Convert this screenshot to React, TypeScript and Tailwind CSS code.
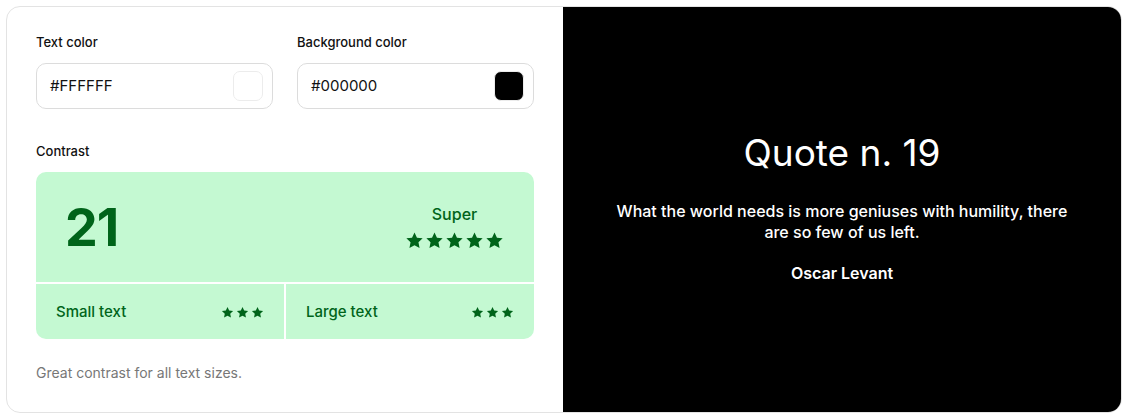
import { useState } from 'react';

const GREEN_BG = 'bg-[#c4f9d2]';

function Star({ size }: { size: number }) {
  return (
    <svg width={size} height={size} viewBox="0 0 24 24" fill="#00641a">
      <path d="M12 1.8l3.1 6.6 7.2.9-5.3 5 1.4 7.1L12 17.9l-6.4 3.5L7 14.3l-5.3-5 7.2-.9z" />
    </svg>
  );
}

function Stars({ count, size, gap }: { count: number; size: number; gap: string }) {
  return (
    <div className={`flex ${gap}`}>
      {Array.from({ length: count }).map((_, i) => (
        <Star key={i} size={size} />
      ))}
    </div>
  );
}

function ColorField({ label, value, swatch }: { label: string; value: string; swatch: string }) {
  return (
    <div className="flex-1">
      <div className="text-[13px] font-medium text-[#111] leading-none mb-[14px]">{label}</div>
      <div className="h-[46px] rounded-[10px] border border-[#dcdcdc] flex items-center justify-between pl-[13px] pr-[9px]">
        <span className="text-[15px] text-[#111]">{value}</span>
        <span className={`w-[30px] h-[30px] rounded-[7px] border border-[#ececec] ${swatch}`} />
      </div>
    </div>
  );
}

export default function App() {
  const [fg] = useState('#FFFFFF');
  const [bg] = useState('#000000');

  return (
    <div className="pt-[6px] pl-[6px] pr-[4px] bg-white" style={{ fontFamily: 'Inter, "Noto Sans", sans-serif' }}>
      <div className="flex h-[407px] rounded-[14px] border border-[#e3e3e3] overflow-hidden">
        {/* left: controls */}
        <div className="w-[556px] shrink-0 pl-[29px] pr-[29px] pt-[29px] flex flex-col">
          <div className="flex gap-[24px]">
            <ColorField label="Text color" value={fg} swatch="bg-white" />
            <ColorField label="Background color" value={bg} swatch="bg-black" />
          </div>

          <div className="text-[13px] font-medium text-[#111] leading-none mt-[36px] mb-[14px]">Contrast</div>

          <div className="rounded-[10px] overflow-hidden flex flex-col gap-[2px] bg-white">
            <div className={`${GREEN_BG} h-[110px] flex items-center justify-between pl-[29px] pr-[30px]`}>
              <span className="text-[52px] font-bold text-[#00641a] leading-none tracking-[-1px] pt-[2px]">21</span>
              <div className="flex flex-col items-center gap-[5px] pb-[2px]">
                <span className="text-[16px] font-medium text-[#00641a]">Super</span>
                <Stars count={5} size={19} gap="gap-[1px]" />
              </div>
            </div>
            <div className="flex gap-[2px] h-[55px]">
              <div className={`${GREEN_BG} flex-1 flex items-center justify-between pl-[20px] pr-[20px] pt-[1px]`}>
                <span className="text-[15px] font-medium text-[#00641a]">Small text</span>
                <Stars count={3} size={13} gap="gap-[2px]" />
              </div>
              <div className={`${GREEN_BG} flex-1 flex items-center justify-between pl-[20px] pr-[20px] pt-[1px]`}>
                <span className="text-[15px] font-medium text-[#00641a]">Large text</span>
                <Stars count={3} size={13} gap="gap-[2px]" />
              </div>
            </div>
          </div>

          <p className="text-[14px] text-[#777] mt-[23px]">Great contrast for all text sizes.</p>
        </div>

        {/* right: preview */}
        <div className="flex-1 bg-black text-white flex flex-col items-center justify-center text-center">
          <h1 className="text-[37px] leading-none font-normal mb-[30px]">Quote n. 19</h1>
          <p className="text-[16px] font-medium leading-[21px] max-w-[460px]">
            What the world needs is more geniuses with humility, there are so few of us left.
          </p>
          <p className="text-[16px] font-semibold mt-[18px]">Oscar Levant</p>
        </div>
      </div>
    </div>
  );
}
